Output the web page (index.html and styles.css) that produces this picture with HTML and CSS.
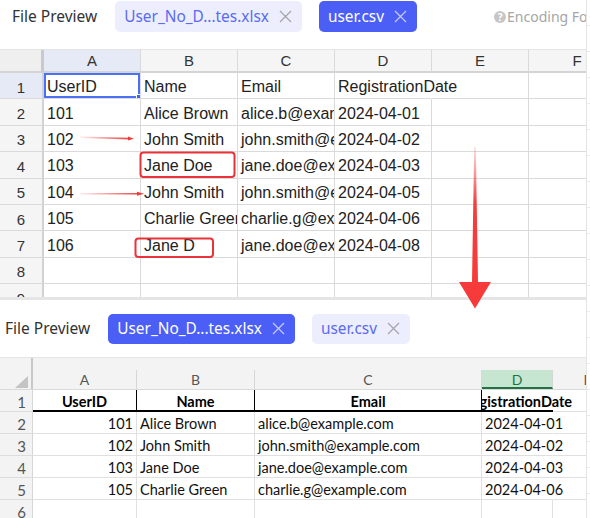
FILE: index.html
```html
<!DOCTYPE html>
<html lang="en">
<head>
    <meta charset="UTF-8">
    <title>File Preview</title>
    <link rel="stylesheet" href="styles.css">
</head>
<body>
    <div class="page">
        <div class="main">
            <!-- before: csv preview -->
            <section class="pane">
                <div class="tabbar tabbar-top">
                    <span class="title">File Preview</span>
                    <span class="tab">User_No_D...tes.xlsx
                        <svg class="x" viewBox="0 0 13 13"><path d="M1 1L12 12M12 1L1 12"/></svg>
                    </span>
                    <span class="tab tab-active">user.csv
                        <svg class="x" viewBox="0 0 13 13"><path d="M1 1L12 12M12 1L1 12"/></svg>
                    </span>
                    <span class="encoding"><i class="help">?</i>Encoding Format</span>
                </div>
                <div class="sheet sheet-top">
                    <table class="grid-top">
                        <colgroup>
                            <col class="c-rowhead"><col class="c97"><col class="c97"><col class="c97"><col class="c97"><col class="c97"><col class="c97">
                        </colgroup>
                        <tr class="head">
                            <th class="corner"></th>
                            <th class="sel">A</th><th>B</th><th>C</th><th>D</th><th>E</th><th>F</th>
                        </tr>
                        <tr><th class="rh sel">1</th><td class="active">UserID</td><td>Name</td><td>Email</td><td class="spill">RegistrationDate</td><td></td><td></td></tr>
                        <tr><th class="rh">2</th><td>101</td><td>Alice Brown</td><td>alice.b@example.com</td><td>2024-04-01</td><td></td><td></td></tr>
                        <tr><th class="rh">3</th><td>102</td><td>John Smith</td><td>john.smith@example.com</td><td>2024-04-02</td><td></td><td></td></tr>
                        <tr><th class="rh">4</th><td>103</td><td>Jane Doe</td><td>jane.doe@example.com</td><td>2024-04-03</td><td></td><td></td></tr>
                        <tr><th class="rh">5</th><td>104</td><td>John Smith</td><td>john.smith@example.com</td><td>2024-04-05</td><td></td><td></td></tr>
                        <tr><th class="rh">6</th><td>105</td><td>Charlie Green</td><td>charlie.g@example.com</td><td>2024-04-06</td><td></td><td></td></tr>
                        <tr><th class="rh">7</th><td>106</td><td>Jane D</td><td>jane.doe@example.com</td><td>2024-04-08</td><td></td><td></td></tr>
                        <tr><th class="rh">8</th><td></td><td></td><td></td><td></td><td></td><td></td></tr>
                        <tr><th class="rh">9</th><td></td><td></td><td></td><td></td><td></td><td></td></tr>
                    </table>
                </div>
            </section>

            <!-- after: deduplicated xlsx -->
            <section class="pane">
                <div class="tabbar tabbar-bottom">
                    <span class="title">File Preview</span>
                    <span class="tab tab-active">User_No_D...tes.xlsx
                        <svg class="x" viewBox="0 0 13 13"><path d="M1 1L12 12M12 1L1 12"/></svg>
                    </span>
                    <span class="tab">user.csv
                        <svg class="x" viewBox="0 0 13 13"><path d="M1 1L12 12M12 1L1 12"/></svg>
                    </span>
                </div>
                <div class="sheet sheet-bottom">
                    <table class="grid-xl">
                        <colgroup>
                            <col class="x-rowhead"><col class="x-a"><col class="x-b"><col class="x-c"><col class="x-d"><col class="x-e">
                        </colgroup>
                        <tr class="xhead">
                            <th><div class="xcorner"><svg width="13" height="12" viewBox="0 0 13 12"><path d="M13 0V12H0Z" fill="#c4c4c4"/></svg></div></th>
                            <th><div class="xcol">A</div></th>
                            <th><div class="xcol">B</div></th>
                            <th><div class="xcol">C</div></th>
                            <th><div class="xcol xsel">D</div></th>
                            <th><div class="xcol">E</div></th>
                        </tr>
                        <tr class="xtitle">
                            <th class="xrh">1</th>
                            <td>UserID</td><td>Name</td><td>Email</td>
                            <td class="wide"><div class="spill-center">RegistrationDate</div></td>
                            <td></td>
                        </tr>
                        <tr><th class="xrh">2</th><td class="num">101</td><td>Alice Brown</td><td>alice.b@example.com</td><td class="date">2024-04-01</td><td></td></tr>
                        <tr><th class="xrh">3</th><td class="num">102</td><td>John Smith</td><td>john.smith@example.com</td><td class="date">2024-04-02</td><td></td></tr>
                        <tr><th class="xrh">4</th><td class="num">103</td><td>Jane Doe</td><td>jane.doe@example.com</td><td class="date">2024-04-03</td><td></td></tr>
                        <tr><th class="xrh">5</th><td class="num">105</td><td>Charlie Green</td><td>charlie.g@example.com</td><td class="date">2024-04-06</td><td></td></tr>
                        <tr><th class="xrh">6</th><td></td><td></td><td></td><td></td><td></td></tr>
                    </table>
                </div>
            </section>
        </div>
        <div class="rail"></div>

        <!-- red review marks drawn over both previews -->
        <svg class="marks" width="590" height="518" viewBox="0 0 590 518">
            <defs>
                <linearGradient id="fade1" gradientUnits="userSpaceOnUse" x1="80" y1="0" x2="132" y2="0">
                    <stop offset="0" stop-color="#f04040" stop-opacity="0.08"/>
                    <stop offset="1" stop-color="#f03a3a"/>
                </linearGradient>
                <linearGradient id="fade2" gradientUnits="userSpaceOnUse" x1="80" y1="0" x2="142" y2="0">
                    <stop offset="0" stop-color="#f04040" stop-opacity="0.08"/>
                    <stop offset="1" stop-color="#f03a3a"/>
                </linearGradient>
                <linearGradient id="fadeY" gradientUnits="userSpaceOnUse" x1="0" y1="147" x2="0" y2="308">
                    <stop offset="0" stop-color="#f64040" stop-opacity="0.15"/>
                    <stop offset="0.35" stop-color="#f63c3c"/>
                    <stop offset="1" stop-color="#f63a3a"/>
                </linearGradient>
            </defs>
            <path d="M80 137.2L130 138.6" stroke="url(#fade1)" stroke-width="1.6" fill="none"/>
            <path d="M128 136.6L134 138.8L128 140.4Z" fill="#f03a3a"/>
            <path d="M80 193.8L139 193.8" stroke="url(#fade2)" stroke-width="1.6" fill="none"/>
            <path d="M137 191.8L144 193.8L137 195.8Z" fill="#f03a3a"/>
            <rect x="140.5" y="152.5" width="94" height="24.5" rx="3" fill="none" stroke="#ea3338" stroke-width="2"/>
            <rect x="135.5" y="238.5" width="77.5" height="18.5" rx="3" fill="none" stroke="#ea3338" stroke-width="2"/>
            <path d="M474.2 147L475.8 147L478 282L491 282L475 308.5L459 282L472 282Z" fill="url(#fadeY)"/>
        </svg>
    </div>
</body>
</html>
```

FILE: styles.css
```css
body {
    margin: 0;
    background: #fff;
    font-family: "Noto Sans", "Liberation Sans", sans-serif;
}
.page {
    position: relative;
    display: flex;
    width: 590px;
    height: 518px;
    overflow: hidden;
}
.main {
    width: 586px;
    overflow: hidden;
}
.rail {
    width: 3px;
    border-left: 1px solid #e4e4e4;
    background: repeating-linear-gradient(to bottom, transparent 0, transparent 25px, #ececec 25px, #ececec 26px);
}

/* tab bar */
.tabbar {
    display: flex;
    align-items: center;
    white-space: nowrap;
    overflow: hidden;
}
.tabbar-top {
    height: 48px;
    padding: 1px 0 0 12px;
    align-items: flex-start;
}
.tabbar-bottom {
    height: 57px;
    padding: 0 0 0 5px;
    border-bottom: 1px solid #e6e6e6;
    align-items: center;
}
.title {
    font-size: 15.5px;
    line-height: 31px;
    color: #333;
    margin-right: 18px;
}
.tab {
    display: inline-flex;
    align-items: center;
    gap: 10px;
    height: 31px;
    padding: 0 10px 0 9px;
    margin-right: 17px;
    border-radius: 5px;
    background: #eceefd;
    color: #5a6af2;
    font-size: 15.4px;
    flex-shrink: 0;
}
.tabbar-bottom .tab {
    height: 30px;
}
.tab .x {
    width: 13px;
    height: 13px;
    stroke: #a3a3a8;
    stroke-width: 1.2;
}
.tab-active {
    background: #4b5ef6;
    color: #fff;
}
.tab-active .x {
    stroke: #c5ccfb;
}
.encoding {
    display: inline-flex;
    align-items: center;
    margin-left: 60px;
    line-height: 31px;
    font-size: 14px;
    color: #a6a6a6;
    flex-shrink: 0;
}
.help {
    display: inline-block;
    width: 12px;
    height: 12px;
    border-radius: 50%;
    background: #c6c6c6;
    color: #fff;
    font-style: normal;
    font-weight: bold;
    font-size: 10px;
    line-height: 12px;
    text-align: center;
    margin-right: 1px;
}

/* top sheet (csv) */
.sheet-top {
    height: 247px;
    border-top: 1px solid #e4e4e4;
    border-bottom: 3px solid #e5e5e5;
    overflow: hidden;
}
.grid-top {
    table-layout: fixed;
    width: 626px;
    border-collapse: separate;
    border-spacing: 0;
    font-family: "Liberation Sans", Arial, sans-serif;
    color: #222;
}
.c-rowhead { width: 44px; }
.c97 { width: 97px; }
.grid-top th,
.grid-top td {
    padding: 0;
    border-right: 1px solid #dadada;
    border-bottom: 1px solid #dadada;
    white-space: nowrap;
    overflow: hidden;
}
.grid-top tr {
    height: 26.4px;
}
.grid-top tr.head {
    height: 23px;
}
.grid-top th {
    background: #f5f5f5;
    font-weight: normal;
    font-size: 15px;
    color: #333;
    text-align: center;
}
.grid-top .head th {
    border-bottom: 2px solid #d4d4d4;
}
.grid-top .corner {
    background: #efefef;
    border-right: 3px solid #c9c9c9;
    border-bottom: 2px solid #c9c9c9;
}
.grid-top .rh {
    border-right: 2px solid #d2d2d2;
    background: #f5f5f5;
    padding-top: 3px;
}
.grid-top th.sel {
    background: #e6e9f6;
}
.grid-top td {
    font-size: 16px;
    padding: 3px 0 0 3px;
}
.grid-top td.spill {
    overflow: visible;
    border-right-color: transparent;
}
.grid-top td.active {
    position: relative;
    box-shadow: inset 0 0 0 2px #4a70f4;
}
.grid-top td.active::after {
    content: "";
    position: absolute;
    right: -2px;
    bottom: -2px;
    width: 4px;
    height: 4px;
    background: #3d64f2;
    border: 1px solid #fff;
}

/* bottom sheet (xlsx) */
.grid-xl {
    table-layout: fixed;
    width: 623px;
    border-collapse: separate;
    border-spacing: 0;
    font-family: Lato, "Noto Sans", sans-serif;
    font-size: 14.5px;
    color: #111;
}
.x-rowhead { width: 33px; }
.x-a { width: 104px; }
.x-b { width: 118px; }
.x-c { width: 227px; }
.x-d { width: 71px; }
.x-e { width: 70px; }
.grid-xl th,
.grid-xl td {
    padding: 0;
    white-space: nowrap;
}
.grid-xl td {
    border-right: 1px solid #e0e0e0;
    border-bottom: 1px solid #e0e0e0;
    overflow: hidden;
    padding: 2px 0 0 3px;
}
.grid-xl tr {
    height: 22px;
}
.xhead th {
    height: 31px;
    background: #f3f3f3;
    border-bottom: 1px solid #dadada;
    vertical-align: bottom;
}
.xcorner {
    display: flex;
    justify-content: flex-end;
    align-items: flex-end;
    height: 31px;
    padding: 0 3px 1px 0;
    border-right: 2px solid #c8c8c8;
    box-sizing: border-box;
}
.xcol {
    height: 19px;
    line-height: 20px;
    border-right: 1px solid #d6d6d6;
    font-weight: normal;
    font-size: 14px;
    color: #565656;
    text-align: center;
}
.xcol.xsel {
    height: 17px;
    background: #c6e6d2;
    border-bottom: 2px solid #217346;
    color: #217346;
}
.xrh {
    font-weight: normal;
    font-size: 15px;
    color: #555;
    text-align: right;
    padding: 2px 6px 0 0 !important;
    background: #f3f3f3;
    border-right: 1px solid #d6d6d6;
    border-bottom: 1px solid #dcdcdc;
}
.xtitle td {
    font-weight: bold;
    text-align: center;
    padding-left: 0;
    color: #000;
    border-right: 1px solid #000;
    border-bottom: 2px solid #000;
}
.xtitle td.wide {
    overflow: visible;
    border-right: none;
}
.xtitle td:last-child {
    border-bottom: 1px solid #e0e0e0;
}
.spill-center {
    display: flex;
    justify-content: center;
    clip-path: inset(-2px -200px -2px 0);
}
.grid-xl td.num {
    text-align: right;
    padding-left: 0;
    padding-right: 3px;
}
.grid-xl td.date {
    overflow: visible;
    border-right-color: transparent;
}

/* review marks */
.marks {
    position: absolute;
    left: 0;
    top: 0;
    pointer-events: none;
}
```
